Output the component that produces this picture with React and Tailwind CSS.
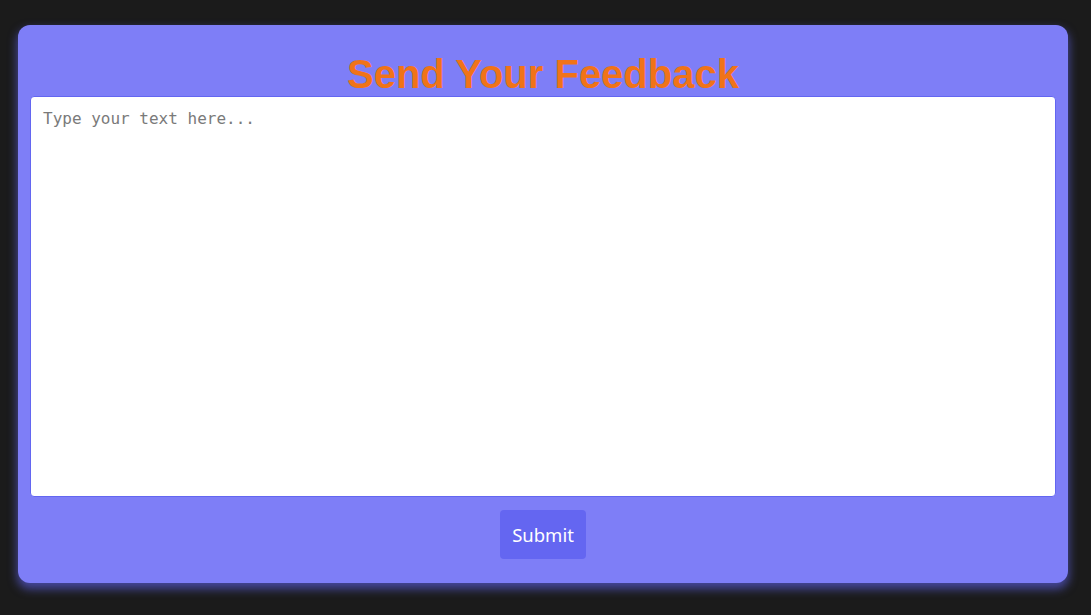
export default function App() {
  return (
    <div className="min-h-screen w-full bg-[#1b1b1b] pt-[25px] pl-[18px]">
      <div className="flex w-[1050px] flex-col items-center rounded-xl bg-[#7e7ef7] pt-[29px] pr-[12px] pb-[24px] pl-[12px] shadow-[0_5px_10px_1px_rgba(99,102,241,0.6)]">
        <h1 className="mb-[2px] font-['Liberation_Sans',Arial,sans-serif] text-[40px] leading-[40px] font-bold text-[#f07318]">
          Send Your Feedback
        </h1>
        <textarea
          className="h-[401px] w-full resize-none rounded border border-[#6366f1] bg-white px-3 pt-[10px] pb-3 font-['DejaVu_Sans_Mono',monospace] text-base text-gray-800 placeholder:text-[#7a7a7a] focus:outline-none"
          placeholder="Type your text here..."
        />
        <button className="mt-[13px] h-[49px] rounded bg-[#6466f1] px-3 font-['Noto_Sans',sans-serif] text-[18.5px] text-white">
          Submit
        </button>
      </div>
    </div>
  );
}
